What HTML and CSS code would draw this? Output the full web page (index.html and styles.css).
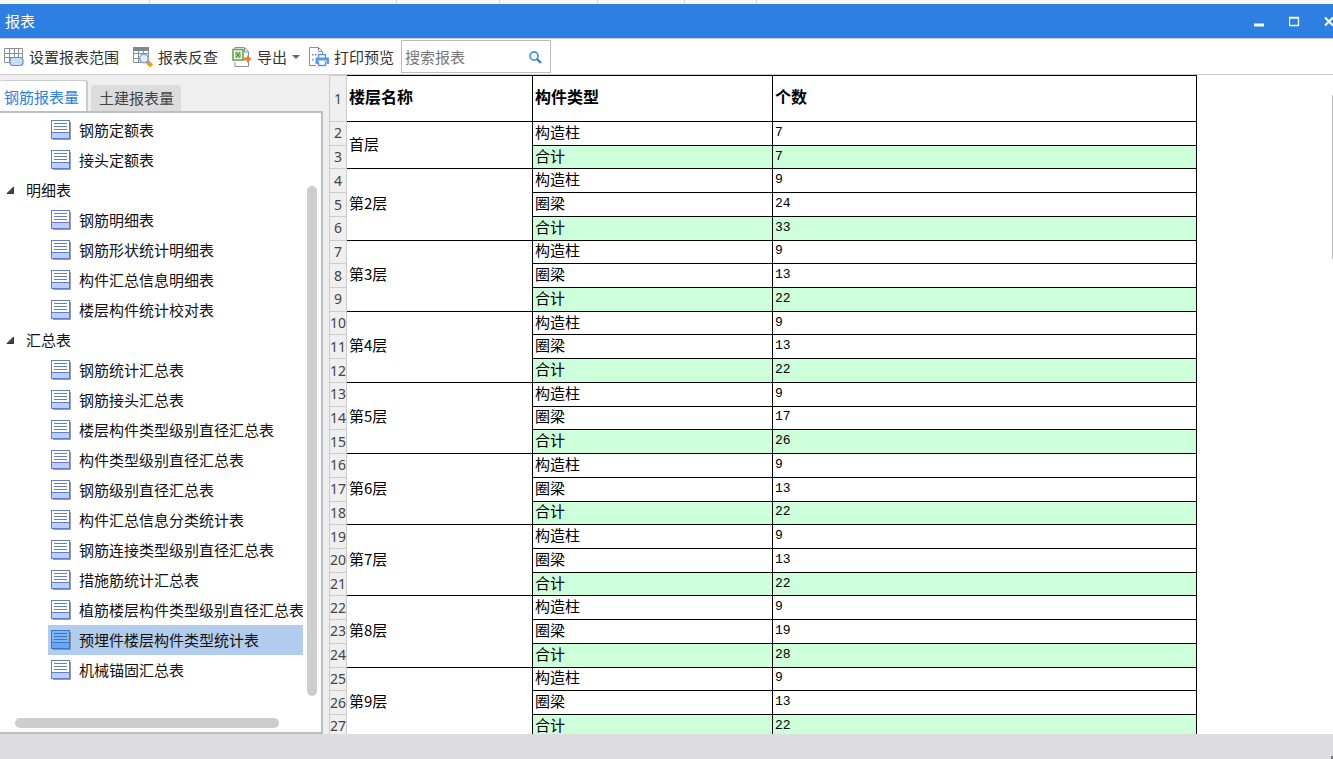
FILE: index.html
```html
<!DOCTYPE html>
<html lang="zh-CN">
<head>
<meta charset="utf-8">
<title>报表</title>
<link rel="stylesheet" href="styles.css">
</head>
<body>
<svg class="defs" aria-hidden="true">
  <symbol id="sheet" viewBox="0 0 20 20">
    <path d="M2 19.5h17.500V2" fill="none" stroke="#7d828f" stroke-opacity=".8"/>
    <rect class="page" x=".5" y=".5" width="18" height="18"/>
    <rect class="foot" x="1" y="13" width="17" height="5"/>
    <path class="rule" d="M1 12.500h17M3 3.500h13M3 6.500h13M3 9.500h13" fill="none"/>
  </symbol>
</svg>
<div class="app">
  <div class="backdrop"><i class="c1"></i><i class="c2"></i><i class="c3"></i><i class="c4"></i><i class="c5"></i><i class="c6"></i></div>
  <header class="titlebar">
    <h1>报表</h1>
    <div class="winbtns">
      <button aria-label="最小化"><svg width="11" height="11" viewBox="0 0 11 11"><path d="M0 9h10" stroke="#fff" stroke-width="3"/></svg></button>
      <button aria-label="最大化"><svg width="11" height="11" viewBox="0 0 11 11"><path d="M.5 1.5h9v8h-9zM0 2h10" fill="none" stroke="#fff" stroke-width="1.3"/></svg></button>
      <button aria-label="关闭"><svg width="11" height="11" viewBox="0 0 11 11"><path d="M1 1.5l8 8M9 1.5l-8 8" stroke="#fff" stroke-width="2"/></svg></button>
    </div>
  </header>
  <div class="toolbar">
    <button class="tool"><svg width="20" height="20" viewBox="0 0 20 20"><path d="M.5 1.500h18v14H.5zM.5 6.500h18M.5 10.500h18M5.500 1v14M10.500 1v14M14.500 1v14" fill="#fff" stroke="#87909a"/><rect x="6" y="10.500" width="13" height="8" rx="3" fill="#c8def8" stroke="#5794dc" stroke-width="1.200"/></svg>设置报表范围</button>
    <button class="tool"><svg width="20" height="20" viewBox="0 0 20 20"><path d="M.5 1.500h15v14H.5zM.5 6.500h15M.5 11.500h15M5.500 4v11M10.500 4v11" fill="#fff" stroke="#87909a"/><path d="M0 0h16v4H0z" fill="#7d8791"/><circle cx="11" cy="11.500" r="4.200" fill="#e4eefc" stroke="#83a0e0" stroke-width="1.500"/><path d="M14.500 15l4 4" stroke="#f09a1c" stroke-width="4"/></svg>报表反查</button>
    <button class="tool export"><svg width="20" height="20" viewBox="0 0 20 20"><path d="M3 15v4.500h13.500V5l-4-4.500H3V2" fill="#fff" stroke="#87909a"/><path d="M12.500 1v4h4" fill="none" stroke="#87909a"/><rect x="1" y="2.500" width="10" height="10.500" fill="#fff" stroke="#5fa54c" stroke-width="1.600"/><rect x="3" y="4.500" width="6" height="6.500" fill="#a5d096"/><path d="M4 5.500l4 5M8 5.500l-4 5" stroke="#4a9a3a" stroke-width="1.200"/><path d="M12 10.500h3V8l4.500 4-4.500 4v-2.500h-3z" fill="#f47b2a"/></svg>导出<span class="caret"></span></button>
    <button class="tool"><svg width="20" height="20" viewBox="0 0 20 20"><path d="M7 18.500H.5V.5h9l4 4V7M9.500.5v4h4" fill="#fff" stroke="#87909a"/><path d="M3 7h1.500v1.500H3zM6 7h1.500v1.500H6zM3 12h1.500v1.500H3z" fill="#7d8791"/><path d="M9.500 11V7.500h7V11M9.500 14.500v4h7v-4" fill="#fff" stroke="#5a98ec" stroke-width="1.400"/><path d="M6.500 10.500h13.500v6.500h-2.500v-3.500H9V17H6.500z" fill="#5a98ec"/></svg>打印预览</button>
    <label class="search"><input type="text" placeholder="搜索报表" aria-label="搜索报表"><svg width="14" height="14" viewBox="0 0 14 14"><circle cx="6" cy="6" r="4" fill="none" stroke="#4aa0d8" stroke-width="1.800"/><path d="M9 9l4 4" stroke="#2f83bd" stroke-width="2.400"/></svg></label>
  </div>
  <main class="main">
    <aside class="side">
      <div class="tabs" role="tablist">
        <button class="tab active" role="tab" aria-selected="true">钢筋报表量</button>
        <button class="tab" role="tab" aria-selected="false">土建报表量</button>
      </div>
      <div class="panel">
        <ul class="tree">
          <li class="leaf"><svg class="ico"><use href="#sheet"/></svg>钢筋定额表</li>
          <li class="leaf"><svg class="ico"><use href="#sheet"/></svg>接头定额表</li>
          <li class="group"><svg width="9" height="9" viewBox="0 0 9 9"><path d="M7.500 1v6.500H1z" fill="#444" stroke="#333"/></svg>明细表</li>
          <li class="leaf"><svg class="ico"><use href="#sheet"/></svg>钢筋明细表</li>
          <li class="leaf"><svg class="ico"><use href="#sheet"/></svg>钢筋形状统计明细表</li>
          <li class="leaf"><svg class="ico"><use href="#sheet"/></svg>构件汇总信息明细表</li>
          <li class="leaf"><svg class="ico"><use href="#sheet"/></svg>楼层构件统计校对表</li>
          <li class="group"><svg width="9" height="9" viewBox="0 0 9 9"><path d="M7.500 1v6.500H1z" fill="#444" stroke="#333"/></svg>汇总表</li>
          <li class="leaf"><svg class="ico"><use href="#sheet"/></svg>钢筋统计汇总表</li>
          <li class="leaf"><svg class="ico"><use href="#sheet"/></svg>钢筋接头汇总表</li>
          <li class="leaf"><svg class="ico"><use href="#sheet"/></svg>楼层构件类型级别直径汇总表</li>
          <li class="leaf"><svg class="ico"><use href="#sheet"/></svg>构件类型级别直径汇总表</li>
          <li class="leaf"><svg class="ico"><use href="#sheet"/></svg>钢筋级别直径汇总表</li>
          <li class="leaf"><svg class="ico"><use href="#sheet"/></svg>构件汇总信息分类统计表</li>
          <li class="leaf"><svg class="ico"><use href="#sheet"/></svg>钢筋连接类型级别直径汇总表</li>
          <li class="leaf"><svg class="ico"><use href="#sheet"/></svg>措施筋统计汇总表</li>
          <li class="leaf"><svg class="ico"><use href="#sheet"/></svg>植筋楼层构件类型级别直径汇总表</li>
          <li class="leaf selected"><svg class="ico"><use href="#sheet"/></svg>预埋件楼层构件类型统计表</li>
          <li class="leaf"><svg class="ico"><use href="#sheet"/></svg>机械锚固汇总表</li>
        </ul>
        <div class="vbar"></div>
        <div class="hbar"></div>
      </div>
    </aside>
    <section class="report">
      <table>
        <colgroup><col class="col-no"><col class="col-floor"><col class="col-type"><col class="col-count"></colgroup>
        <thead><tr><th class="no">1</th><th>楼层名称</th><th>构件类型</th><th>个数</th></tr></thead>
        <tbody>
          <tr><th class="no">2</th><td rowspan="2">首层</td><td>构造柱</td><td class="num">7</td></tr>
          <tr class="sum"><th class="no">3</th><td>合计</td><td class="num">7</td></tr>
          <tr><th class="no">4</th><td rowspan="3">第2层</td><td>构造柱</td><td class="num">9</td></tr>
          <tr><th class="no">5</th><td>圈梁</td><td class="num">24</td></tr>
          <tr class="sum"><th class="no">6</th><td>合计</td><td class="num">33</td></tr>
          <tr><th class="no">7</th><td rowspan="3">第3层</td><td>构造柱</td><td class="num">9</td></tr>
          <tr><th class="no">8</th><td>圈梁</td><td class="num">13</td></tr>
          <tr class="sum"><th class="no">9</th><td>合计</td><td class="num">22</td></tr>
          <tr><th class="no">10</th><td rowspan="3">第4层</td><td>构造柱</td><td class="num">9</td></tr>
          <tr><th class="no">11</th><td>圈梁</td><td class="num">13</td></tr>
          <tr class="sum"><th class="no">12</th><td>合计</td><td class="num">22</td></tr>
          <tr><th class="no">13</th><td rowspan="3">第5层</td><td>构造柱</td><td class="num">9</td></tr>
          <tr><th class="no">14</th><td>圈梁</td><td class="num">17</td></tr>
          <tr class="sum"><th class="no">15</th><td>合计</td><td class="num">26</td></tr>
          <tr><th class="no">16</th><td rowspan="3">第6层</td><td>构造柱</td><td class="num">9</td></tr>
          <tr><th class="no">17</th><td>圈梁</td><td class="num">13</td></tr>
          <tr class="sum"><th class="no">18</th><td>合计</td><td class="num">22</td></tr>
          <tr><th class="no">19</th><td rowspan="3">第7层</td><td>构造柱</td><td class="num">9</td></tr>
          <tr><th class="no">20</th><td>圈梁</td><td class="num">13</td></tr>
          <tr class="sum"><th class="no">21</th><td>合计</td><td class="num">22</td></tr>
          <tr><th class="no">22</th><td rowspan="3">第8层</td><td>构造柱</td><td class="num">9</td></tr>
          <tr><th class="no">23</th><td>圈梁</td><td class="num">19</td></tr>
          <tr class="sum"><th class="no">24</th><td>合计</td><td class="num">28</td></tr>
          <tr><th class="no">25</th><td rowspan="3">第9层</td><td>构造柱</td><td class="num">9</td></tr>
          <tr><th class="no">26</th><td>圈梁</td><td class="num">13</td></tr>
          <tr class="sum"><th class="no">27</th><td>合计</td><td class="num">22</td></tr>
        </tbody>
      </table>
      <div class="edge"></div>
    </section>
  </main>
  <footer class="status"><i></i></footer>
</div>
</body>
</html>
```

FILE: styles.css
```css
* { box-sizing: border-box; }
body {
  margin: 0;
  font: 15px/20px "Noto Sans CJK SC", sans-serif;
  color: #1a1a1a;
}
button { border: 0; padding: 0; background: none; font: inherit; color: inherit; }
svg { flex: none; display: block; }
.defs { position: absolute; width: 0; height: 0; }
.app { display: flex; flex-direction: column; height: 100vh; overflow: hidden; background: #fff; }

.backdrop { display: flex; height: 4px; flex: none; background: #f6f9f6; }
.backdrop i { border-right: 1px solid #d5d8d5; }
.c1 { width: 150px; }
.c2 { width: 247px; }
.c3 { width: 103px; }
.c4 { width: 98px; }
.c5 { width: 87px; }
.c6 { width: 72px; }

.titlebar {
  display: flex; align-items: center; justify-content: space-between; flex: none;
  height: 34px; padding-left: 5px; background: #2d7fe2; color: #fff;
}
.titlebar h1 { margin: 0; font-size: 15px; font-weight: 400; }
.winbtns { display: flex; gap: 24px; overflow: hidden; margin-right: -2px; }

.toolbar {
  display: flex; align-items: center; flex: none;
  height: 37px; padding-left: 4px; gap: 14px;
  border-bottom: 1px solid #ccc; border-top: 1px solid #ccc;
}
.tool { display: flex; align-items: center; gap: 5px; color: #333; white-space: nowrap; }
.export { margin-right: -5px; }
.caret { border: 4px solid transparent; border-top-color: #666; border-bottom: 0; }
.search {
  display: flex; align-items: center; width: 150px; height: 33px;
  margin-left: -7px; padding: 0 8px 0 3px; border: 1px solid #bbb; background: #fff;
}
.search input { flex: 1; min-width: 0; border: 0; padding: 0; outline: 0; font: inherit; }
.search input::placeholder { color: #777; opacity: 1; }

.main { display: flex; flex: 1; min-height: 0; }
.side { display: flex; flex-direction: column; flex: none; width: 329px; padding-right: 6px; background: #efefef; }
.tabs { display: flex; align-items: flex-end; gap: 3px; height: 36px; flex: none; }
.tab { height: 26px; padding: 0 7px 0 8px; border-radius: 3px 3px 0 0; background: #dcdcdc; color: #444; }
.tab.active {
  height: 31px; padding: 2px 7px 0 4px; border: 1px solid #c8ccd2; border-width: 1px 2px 0 0;
  background: #fff; color: #2d7fe2;
}
.panel {
  display: grid; grid-template: 1fr 34px / 303px 1fr; flex: 1; min-height: 0;
  border: 2px solid #b9bfc4; border-left: 0; background: #fff;
}
.tree { list-style: none; margin: 0; padding: 2px 0 0; min-height: 0; overflow: hidden; color: #111; }
.tree li { display: flex; align-items: center; height: 30px; white-space: nowrap; }
.leaf {
  --paper: #fff; --band: #bccffa; --ink: #5f7dcc;
  margin-left: 48px; padding-left: 3px; gap: 8px;
}
.leaf.selected { --paper: #7fb4f2; --band: #6ba6ee; --ink: #3479c6; background: #b2ccee; }
.group { padding-left: 6px; gap: 11px; }
.ico { width: 20px; height: 20px; }
.page { fill: var(--paper); stroke: var(--ink); }
.foot { fill: var(--band); }
.rule { stroke: var(--ink); }
.vbar { width: 10px; margin: 73px 0 2px 4px; border-radius: 5px; background: #cdcdcd; }
.hbar { height: 10px; margin: 20px 24px 0 15px; border-radius: 5px; background: #cdcdcd; }

.report { flex: 1; min-width: 0; overflow: hidden; display: flex; justify-content: space-between; align-items: flex-start; }
table {
  flex: none; table-layout: fixed; width: 868px; height: 664px;
  border-collapse: separate; border-spacing: 0; color: #000;
}
.col-no { width: 18px; }
.col-floor { width: 186px; }
.col-type { width: 240px; }
.col-count { width: 424px; }
th, td {
  padding: 0 2px 3px; text-align: left; font-weight: 400; line-height: 18px;
  border-right: 1px solid #000; border-bottom: 1px solid #000;
}
thead th { height: 47px; padding-bottom: 5px; border-top: 1px solid #000; font-size: 16px; font-weight: 700; }
th.no {
  padding: 0; text-align: center; background: #efefef; color: #444;
  font: 14px/20px "Noto Sans", sans-serif; border-color: #ccc; border-left: 1px solid #ccc;
}
.sum td { background: #ccffda; }
td.num { padding-bottom: 1px; font: 13px/20px "Liberation Mono", monospace; }
.edge { width: 1px; height: 164px; margin-top: 20px; background: #bbb; }

.status { display: flex; justify-content: flex-end; align-items: flex-end; height: 25px; flex: none; background: #dddddf; }
.status i { width: 2px; height: 3px; background: #777; }
```
